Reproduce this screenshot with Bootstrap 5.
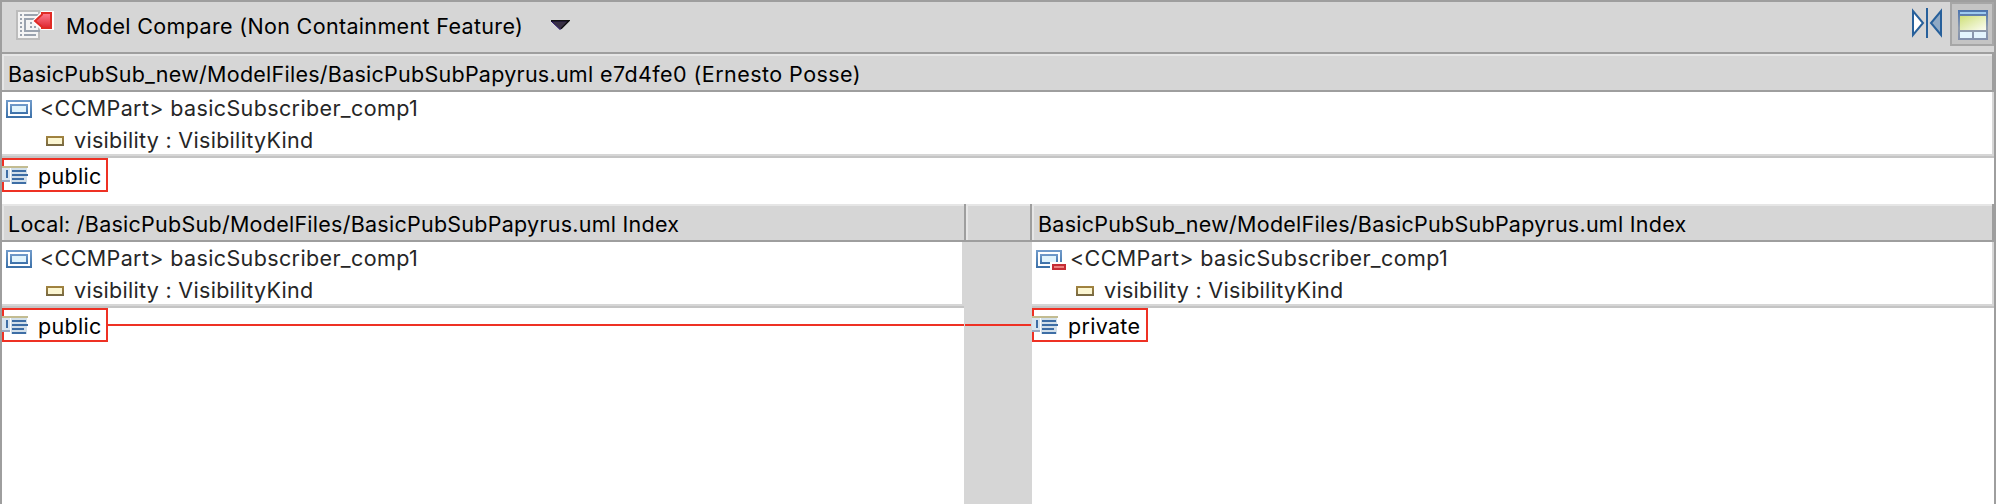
<!DOCTYPE html>
<html lang="en">
<head>
<meta charset="utf-8">
<title>Model Compare</title>
<link href="https://cdn.jsdelivr.net/npm/bootstrap@5.3.0/dist/css/bootstrap.min.css" rel="stylesheet">
<style>
body{font-family:"Inter",sans-serif;font-size:21.5px;line-height:30px;letter-spacing:.3px;color:#000;background:#fff}
.frame{height:504px;margin-right:2px;border:2px solid #9e9e9e;border-bottom:0}
.tools{height:50px;background:#d6d6d6;padding-left:14px}
.tools .title{margin-left:12px;margin-top:9px;letter-spacing:.34px}
.tools .doc{margin-top:8px}
.caret{margin:18px 0 0 27px}
.mirror{margin:6px 8px 0 0}
.toggle{width:44px;height:44px;border:2px solid #a6a6a6;background:#c4c4c4;padding:6px}
.head{height:40px;background:#d6d6d6;border:2px solid #9e9e9e;border-left:0;box-shadow:inset 2px 2px #e6e6e6;padding:5px 0 0 6px;letter-spacing:.255px}
.head .rev{letter-spacing:.44px}
.head.lower{height:38px;border-top:0}
.head.flat{border-right:0}
.head.split{border-left:2px solid #9e9e9e}
.tree{height:66px;border-bottom:2px solid #c4c4c4;box-shadow:inset 0 -2px #d6d6d6,inset -2px 0 #d6d6d6;color:#262626}
.tree .entry{height:32px;padding:1px 0 0 4px;letter-spacing:.37px}
.tree .entry.sub{padding-left:44px;letter-spacing:.3px}
.tree svg,.mark-box svg,.tools svg{flex:none;display:block}
.tree svg{margin-top:7px}
.tree .sub svg{margin-top:11px}
.entry span{margin-left:8px}
.entry.removed span{margin-left:4px}
.entry.sub span{margin-left:10px}
.values{height:46px}
.mark-box{height:34px;border:2px solid #ee3124}
.mark-box svg{margin:6px 0 0 -2px}
.mark-box span{margin:1px 0 0 10px}
.w-pub{width:106px}.w-priv{width:116px}
.link-line{height:2px;background:#ee3124;margin-top:16px}
.side{width:962px}.mid{width:68px;background:#d6d6d6}
.mid .link-line{margin:82px 1px 0}
.t{white-space:pre;display:inline-block}
</style>
</head>
<body>
<svg width="0" height="0" class="position-absolute">
<defs>
<linearGradient id="b" x2="0" y2="1"><stop stop-color="#729ccb"/><stop offset="1" stop-color="#3b70a8"/></linearGradient>
<linearGradient id="r" x2="0" y2="1"><stop stop-color="#ff7d91"/><stop offset="1" stop-color="#de242d"/></linearGradient>
<linearGradient id="o" x2="0" y2="1"><stop stop-color="#a4853e"/><stop offset="1" stop-color="#756743"/></linearGradient>
<linearGradient id="g" x2="1" y2="1"><stop stop-color="#cfe079"/><stop offset="1" stop-color="#fbfcf2"/></linearGradient>
<linearGradient id="w" x2="0" y2="1"><stop stop-color="#4a73ae"/><stop offset=".6" stop-color="#929dad"/><stop offset="1" stop-color="#8290ad"/></linearGradient>
<symbol id="part" viewBox="0 0 26 18"><path fill="url(#b)" d="M0 0h26v18H0z"/><path fill="#fff" d="M2 2h22v14H2z"/><path fill="url(#b)" d="M4 4h18v10H4z"/><path fill="#e1f4fd" d="M6 6h14v6H6z"/></symbol>
<symbol id="attr" viewBox="0 0 18 10"><path fill="url(#o)" d="M0 0h18v10H0z"/><path fill="#fbf6d2" d="M2 2h14v6H2z"/></symbol>
<symbol id="lit" viewBox="0 0 26 20"><path fill="#d8e5ef" d="M0 2h8v12H0z"/><path fill="#c3bc91" d="M0 0h26v2H0z"/><path fill="#d3e0ea" d="M9 2h16v16H9z"/><path fill="#3e6ea5" d="M4 4h2v8H4zM10 4h14v2H10zM10 8h16v2H10zM10 12h12v2H10zM10 16h14v2H10z"/><path fill="#9aaac2" d="M0 14h8v2H0z"/></symbol>
</defs>
</svg>
<div class="frame d-flex flex-column overflow-hidden">
 <div class="tools d-flex align-items-start">
  <svg class="doc" width="38" height="32" viewBox="0 0 38 32"><path fill="#f4f4f4" stroke="#bcbcbc" stroke-width="2" d="M1 1h22v28H1z"/><path stroke="#9aa2ae" stroke-width="2" fill="none" d="M4 5h2M4 9h2M4 13h2M4 17h2M4 21h2M4 25h2M8 5h14M8 25h12M20 9H9v12h15M14 13h2M14 17h2M18 17h2"/><path d="M16 11L25 2V1h13v19H25z" fill="#fff"/><path d="M19 11l7-6.500V3h9v15h-9v-1z" fill="url(#r)" stroke="#e02b25" stroke-width="2"/></svg>
  <span class="title t">Model Compare (Non Containment Feature)</span>
  <svg class="caret" width="20" height="10" viewBox="0 0 20 10"><path d="M1 1h18l-9 8.500z" fill="#393044" stroke="#28136f"/><path d="M1 .7h18l-8 8" fill="none" stroke="#111" stroke-width="1.500"/></svg>
  <svg class="mirror ms-auto" width="30" height="30" viewBox="0 0 30 30"><path d="M1 3v24L11 15z" fill="#fff" stroke="#27609b" stroke-width="2"/><path d="M29 3v24L19 15z" fill="#8fa9c4" stroke="#27609b" stroke-width="2"/><path d="M14 0h2v30h-2z" fill="#27609b"/></svg>
  <div class="toggle"><svg width="30" height="30" viewBox="0 0 30 30"><path fill="url(#w)" d="M0 0h30v30H0z"/><path fill="#9dcbf0" d="M2 2h26v2H2z"/><path fill="url(#g)" d="M2 6h26v14H2z"/><path fill="#e3f4fe" d="M2 22h12v6H2zM16 22h12v6H16z"/></svg></div>
 </div>
 <div class="head"><span class="t">BasicPubSub_new/ModelFiles/BasicPubSubPapyrus.uml<span class="rev"> e7d4fe0 (Ernesto Posse)</span></span></div>
 <div class="tree">
  <div class="entry d-flex"><svg width="26" height="18"><use href="#part"/></svg><span class="t">&lt;CCMPart&gt; basicSubscriber_comp1</span></div>
  <div class="entry sub d-flex"><svg width="18" height="10"><use href="#attr"/></svg><span class="t">visibility : VisibilityKind</span></div>
 </div>
 <div class="values"><div class="mark-box w-pub d-flex"><svg width="26" height="20"><use href="#lit"/></svg><span class="t">public</span></div></div>
 <div class="d-flex flex-grow-1">
  <div class="side">
   <div class="head lower flat"><span class="t">Local: /BasicPubSub/ModelFiles/BasicPubSubPapyrus.uml Index</span></div>
   <div class="tree">
    <div class="entry d-flex"><svg width="26" height="18"><use href="#part"/></svg><span class="t">&lt;CCMPart&gt; basicSubscriber_comp1</span></div>
    <div class="entry sub d-flex"><svg width="18" height="10"><use href="#attr"/></svg><span class="t">visibility : VisibilityKind</span></div>
   </div>
   <div class="d-flex"><div class="mark-box w-pub d-flex"><svg width="26" height="20"><use href="#lit"/></svg><span class="t">public</span></div><div class="link-line flex-grow-1"></div></div>
  </div>
  <div class="mid"><div class="head lower split"></div><div class="link-line"></div></div>
  <div class="flex-grow-1">
   <div class="head lower"><span class="t">BasicPubSub_new/ModelFiles/BasicPubSubPapyrus.uml Index</span></div>
   <div class="tree">
    <div class="entry removed d-flex"><svg width="30" height="20"><use href="#part" width="26" height="18"/><path fill="#fff" d="M14 12h16v8H14z"/><path fill="#c52c35" d="M16 14h14v6H16z"/><path fill="#ec8080" d="M18 16h10v2H18z"/></svg><span class="t">&lt;CCMPart&gt; basicSubscriber_comp1</span></div>
    <div class="entry sub d-flex"><svg width="18" height="10"><use href="#attr"/></svg><span class="t">visibility : VisibilityKind</span></div>
   </div>
   <div class="mark-box w-priv d-flex"><svg width="26" height="20"><use href="#lit"/></svg><span class="t">private</span></div>
  </div>
 </div>
</div>
</body>
</html>
